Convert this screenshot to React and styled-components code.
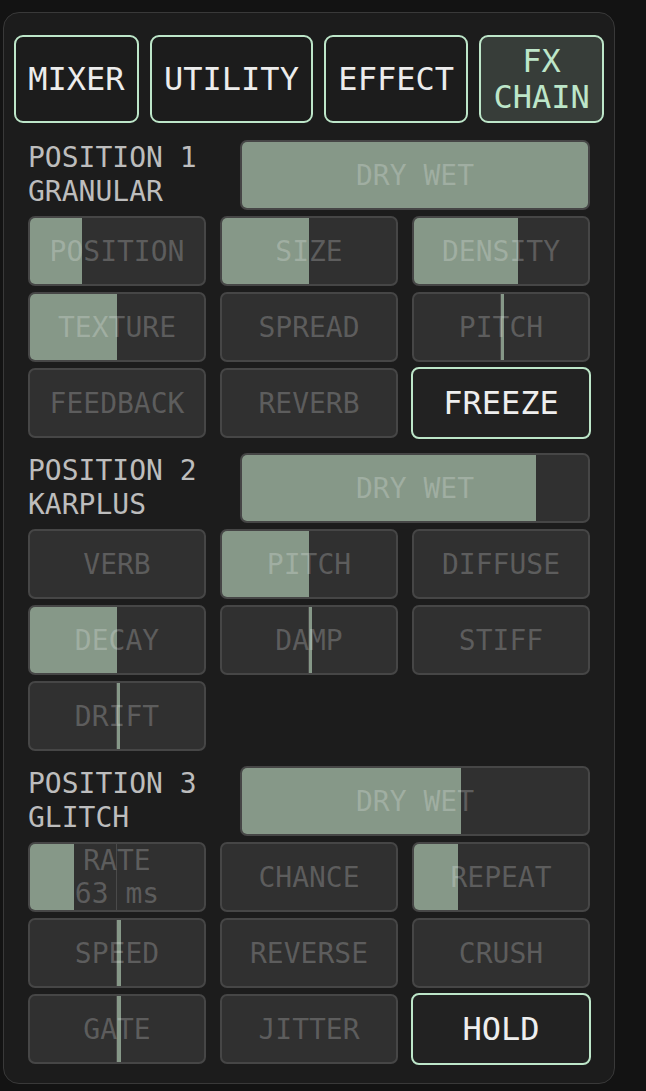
import React from 'react'
import styled, { createGlobalStyle } from 'styled-components'

const GlobalStyle = createGlobalStyle`
  html, body {
    margin: 0;
    padding: 0;
    background: #131313;
  }
  body {
    font-family: "DejaVu Sans Mono", "Liberation Mono", monospace;
  }
`

const tabs = [
  { label: 'MIXER' },
  { label: 'UTILITY' },
  { label: 'EFFECT' },
  { label: 'FX\nCHAIN', active: true }
]

const sections = [
  {
    title: 'POSITION 1',
    name: 'GRANULAR',
    dryWet: 1,
    knobs: [
      { label: 'POSITION', value: 0.3 },
      { label: 'SIZE', value: 0.5 },
      { label: 'DENSITY', value: 0.6 },
      { label: 'TEXTURE', value: 0.5 },
      { label: 'SPREAD', value: 0 },
      { label: 'PITCH', bipolar: true, value: 0.04 },
      { label: 'FEEDBACK', value: 0 },
      { label: 'REVERB', value: 0 },
      { label: 'FREEZE', toggle: true, on: true }
    ]
  },
  {
    title: 'POSITION 2',
    name: 'KARPLUS',
    dryWet: 0.85,
    knobs: [
      { label: 'VERB', value: 0 },
      { label: 'PITCH', value: 0.5 },
      { label: 'DIFFUSE', value: 0 },
      { label: 'DECAY', value: 0.5 },
      { label: 'DAMP', bipolar: true, value: 0.04 },
      { label: 'STIFF', value: 0 },
      { label: 'DRIFT', bipolar: true, value: 0.04 }
    ]
  },
  {
    title: 'POSITION 3',
    name: 'GLITCH',
    dryWet: 0.634,
    knobs: [
      { label: 'RATE', sub: '63 ms', value: 0.25, marker: true },
      { label: 'CHANCE', value: 0 },
      { label: 'REPEAT', value: 0.25 },
      { label: 'SPEED', bipolar: true, value: 0.045 },
      { label: 'REVERSE', value: 0 },
      { label: 'CRUSH', value: 0 },
      { label: 'GATE', bipolar: true, value: 0.045 },
      { label: 'JITTER', value: 0 },
      { label: 'HOLD', toggle: true, on: true }
    ]
  }
]

const fillStyle = knob => {
  if (knob.bipolar) {
    const start = Math.min(0.5, 0.5 + knob.value / 2)
    const size = Math.abs(knob.value / 2)
    return { left: `${start * 100}%`, width: `${size * 100}%` }
  }
  return { left: 0, width: `${knob.value * 100}%` }
}

const Knob = ({ knob }) => {
  if (knob.toggle) {
    return <Toggle $on={knob.on}>{knob.label}</Toggle>
  }
  return (
    <KnobBox>
      {(knob.bipolar || knob.marker) && <CenterLine />}
      <Fill style={fillStyle(knob)} />
      <KnobLabel>
        {knob.label}
        {knob.sub && <><br />{knob.sub}</>}
      </KnobLabel>
    </KnobBox>
  )
}

const App = () => {
  return (
    <>
      <GlobalStyle />
      <Page>
        <Panel>
          <TabRow>
            {tabs.map(tab => (
              <Tab key={tab.label} $active={tab.active}>{tab.label}</Tab>
            ))}
          </TabRow>
          <Chain>
            {sections.map(section => (
              <Section key={section.title}>
                <Header>
                  <Title>
                    {section.title}
                    <br />
                    {section.name}
                  </Title>
                  <KnobBox>
                    <Fill style={{ left: 0, width: `${section.dryWet * 100}%` }} />
                    <KnobLabel>DRY WET</KnobLabel>
                  </KnobBox>
                </Header>
                <KnobGrid>
                  {section.knobs.map(knob => (
                    <Knob key={knob.label} knob={knob} />
                  ))}
                </KnobGrid>
              </Section>
            ))}
          </Chain>
        </Panel>
      </Page>
    </>
  )
}

const Page = styled.div`
  padding: 12px 0 0 3px;
`

const Panel = styled.div`
  width: 612px;
  box-sizing: border-box;
  background: #1c1c1c;
  border: 1px solid #393939;
  border-radius: 16px;
  padding: 22px 10px 19px 10px;
`

const TabRow = styled.div`
  display: flex;
  gap: 11px;
`

const Tab = styled.div`
  flex: 1 1 auto;
  height: 88px;
  box-sizing: border-box;
  padding: 0 12px;
  display: flex;
  align-items: center;
  justify-content: center;
  text-align: center;
  white-space: pre-line;
  font-size: 32px;
  line-height: 36px;
  border: 2px solid #bde6c9;
  border-radius: 9px;
  background: ${p => (p.$active ? '#373d39' : '#1c1c1c')};
  color: ${p => (p.$active ? '#bde6c9' : '#ececec')};
`

const Chain = styled.div`
  display: flex;
  flex-direction: column;
  gap: 15px;
  padding: 17px 14px 0;
`

const Section = styled.div`
  display: flex;
  flex-direction: column;
  gap: 6px;
`

const Header = styled.div`
  display: grid;
  grid-template-columns: 212px 1fr;
  height: 70px;
`

const Title = styled.div`
  align-self: center;
  font-size: 28px;
  line-height: 34px;
  color: #bdbdbd;
`

const KnobGrid = styled.div`
  display: grid;
  grid-template-columns: repeat(3, 1fr);
  grid-auto-rows: 70px;
  column-gap: 14px;
  row-gap: 6px;
`

const KnobBox = styled.div`
  position: relative;
  overflow: hidden;
  box-sizing: border-box;
  border: 2px solid #464646;
  border-radius: 7px;
  background: #303030;
  display: flex;
  align-items: center;
  justify-content: center;
`

const Fill = styled.div`
  position: absolute;
  top: 0;
  bottom: 0;
  background: #869888;
`

const CenterLine = styled.div`
  position: absolute;
  top: 0;
  bottom: 0;
  left: calc(50% - 1px);
  width: 1px;
  background: #4a4a4a;
`

const KnobLabel = styled.div`
  position: relative;
  z-index: 1;
  text-align: center;
  font-size: 28px;
  line-height: 33px;
  color: rgba(255, 255, 255, 0.22);
`

const Toggle = styled.div`
  box-sizing: border-box;
  border: 2px solid ${p => (p.$on ? '#bde6c9' : '#464646')};
  border-radius: 8px;
  background: ${p => (p.$on ? '#222222' : '#303030')};
  color: #eeeeee;
  font-size: 32px;
  display: flex;
  align-items: center;
  justify-content: center;
  margin: -1px;
`

export default App
